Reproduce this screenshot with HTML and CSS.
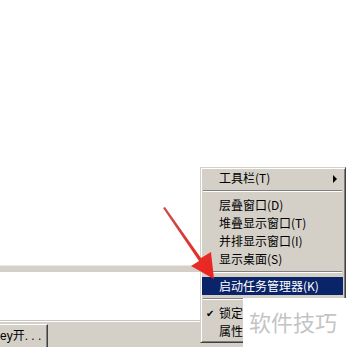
FILE: index.html
```html
<!DOCTYPE html>
<html lang="zh-CN">
<head>
  <meta charset="UTF-8" />
  <title>任务栏菜单</title>
  <link rel="stylesheet" href="styles.css">
</head>
<body>
  <div class="screen">
    <div class="blank"></div>
    <div class="band"></div>
    <div class="pane"></div>
    <div class="taskbar">
      <div class="task-btn">ey开. . .</div>
    </div>

    <div class="menu">
      <div class="item">工具栏(T)<span class="submenu"></span></div>
      <div class="sep"></div>
      <div class="item">层叠窗口(D)</div>
      <div class="item">堆叠显示窗口(T)</div>
      <div class="item">并排显示窗口(I)</div>
      <div class="item">显示桌面(S)</div>
      <div class="sep"></div>
      <div class="item active">启动任务管理器(K)</div>
      <div class="sep"></div>
      <div class="item"><span class="check">✔</span>锁定</div>
      <div class="item">属性</div>
    </div>

    <svg class="arrow" width="346" height="347" viewBox="0 0 346 347">
      <defs>
        <linearGradient id="red" x1="0" y1="0" x2="1" y2="1">
          <stop offset="0" stop-color="#c8504a" />
          <stop offset="1" stop-color="#f0201c" />
        </linearGradient>
      </defs>
      <polygon points="163,208 165,207 201,258 211,252 214,279 191,266 199,261" fill="url(#red)" />
    </svg>

    <div class="watermark">软件技巧</div>
  </div>
</body>
</html>
```

FILE: styles.css
```css
html, body {
  margin: 0;
  padding: 0;
}

body {
  width: 346px;
  height: 347px;
  overflow: hidden;
  background: #fff;
  font-family: "Noto Sans CJK SC", "DejaVu Sans", sans-serif;
  font-size: 12px;
}

.screen {
  position: relative;
  width: 346px;
  height: 347px;
  display: flex;
  flex-direction: column;
}

.blank {
  height: 266px;
  background: #fff;
  border-bottom: 1px solid #ebe9e4;
}

.band {
  height: 6px;
  background: #d4d0c8;
}

.pane {
  height: 48px;
  background: #fff;
  border-bottom: 1px solid #c8c5be;
}

.taskbar {
  flex: 1;
  background: #d4d0c8;
  border-top: 1px solid #fff;
  padding-top: 2px;
  display: flex;
}

.task-btn {
  width: 47px;
  height: 22px;
  line-height: 22px;
  border-top: 1px solid #fff;
  border-right: 1px solid #404040;
  box-shadow: inset -1px 0 0 #808080;
  color: #000;
  font-family: "Liberation Sans", "Noto Sans CJK SC", sans-serif;
  font-size: 12px;
  white-space: nowrap;
  overflow: hidden;
}

.menu {
  position: absolute;
  left: 200px;
  top: 167px;
  width: 141px;
  background: #d4d0c8;
  border: 1px solid;
  border-color: #d4d0c8 #404040 #404040 #d4d0c8;
  box-shadow: inset 1px 1px 0 #fff, inset -1px -1px 0 #808080;
  padding: 1px 2px 2px 1px;
}

.item {
  position: relative;
  height: 18px;
  line-height: 18px;
  padding-left: 17px;
  color: #000;
  white-space: nowrap;
}

.item.active {
  background: #0a246a;
  color: #fff;
}

.sep {
  height: 9px;
  position: relative;
}

.sep::after {
  content: "";
  position: absolute;
  left: 1px;
  right: 1px;
  top: 3px;
  height: 1px;
  background: #808080;
  border-bottom: 1px solid #fff;
}

.submenu {
  position: absolute;
  right: 6px;
  top: 6px;
  width: 0;
  height: 0;
  border-top: 4px solid transparent;
  border-bottom: 4px solid transparent;
  border-left: 4px solid #000;
}

.check {
  position: absolute;
  left: 4px;
  top: 0;
  font-size: 10px;
}

.arrow {
  position: absolute;
  left: 0;
  top: 0;
}

.watermark {
  position: absolute;
  left: 243px;
  top: 298px;
  width: 103px;
  height: 49px;
  background: #fff;
  color: #c4c4c4;
  font-size: 22px;
  line-height: 46px;
  padding-left: 6px;
  box-sizing: border-box;
}
```
